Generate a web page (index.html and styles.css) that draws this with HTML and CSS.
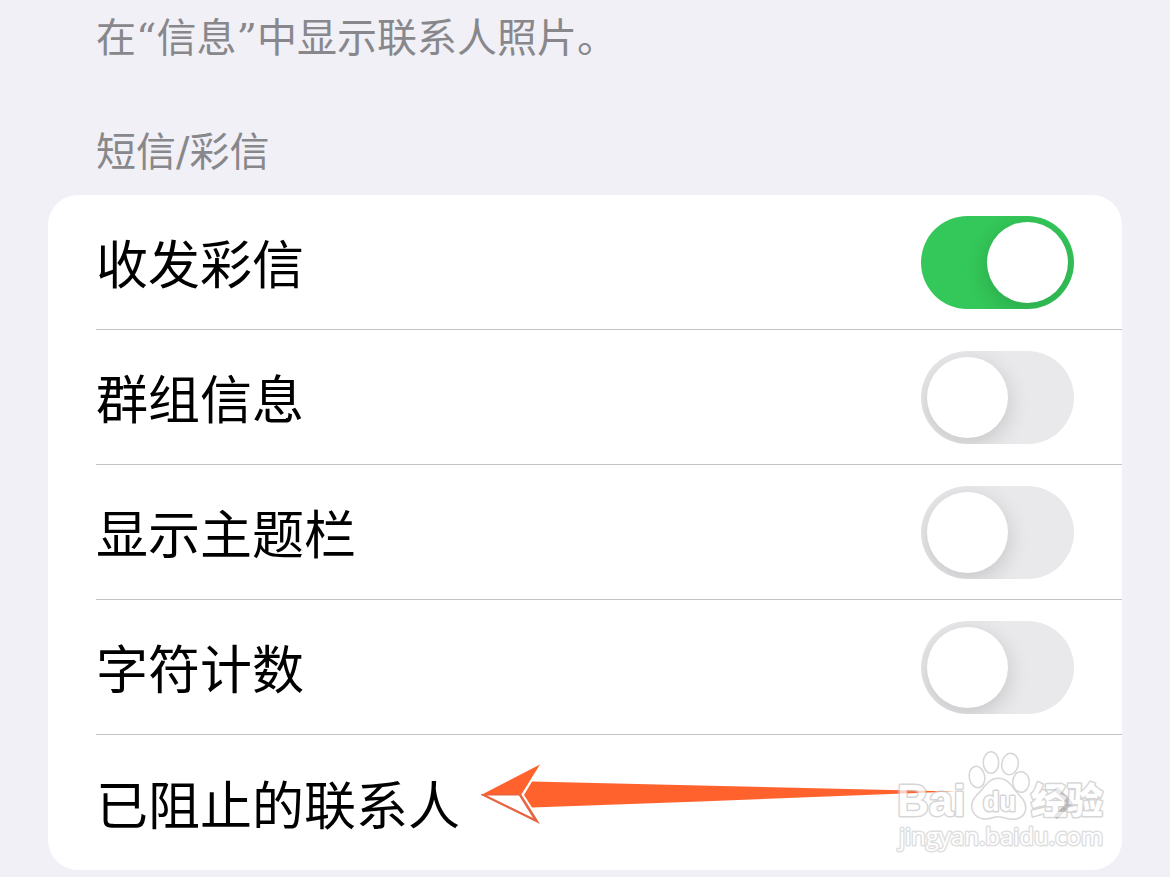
FILE: index.html
```
<!DOCTYPE html>
<html lang="zh-CN">
<head>
<meta charset="utf-8">
<meta name="viewport" content="width=device-width, initial-scale=1">
<title>信息</title>
<link rel="stylesheet" href="styles.css">
</head>
<body>
<main class="settings">
  <p class="note">在“信息”中显示联系人照片。</p>
  <h2 class="section-title">短信/彩信</h2>
  <section class="card">
    <div class="row">
      <label class="row-label" for="mms">收发彩信</label>
      <input class="switch" type="checkbox" role="switch" id="mms" checked>
    </div>
    <div class="row">
      <label class="row-label" for="group">群组信息</label>
      <input class="switch" type="checkbox" role="switch" id="group">
    </div>
    <div class="row">
      <label class="row-label" for="subject">显示主题栏</label>
      <input class="switch" type="checkbox" role="switch" id="subject">
    </div>
    <div class="row">
      <label class="row-label" for="count">字符计数</label>
      <input class="switch" type="checkbox" role="switch" id="count">
    </div>
    <a class="row" href="#blocked">
      <span class="row-label">已阻止的联系人</span>
      <svg class="arrow" width="480" height="70" viewBox="480 760 480 70" aria-hidden="true">
        <path fill="#ff622d" d="M532 781.500L700 785.500L955 791.500L700 801.500L532 807.500L524 795Z"/>
        <path fill="#fff" d="M481 795H521L540 824Z"/>
        <path fill="#ff622d" d="M481 795L540 764.500L521 795Z"/>
        <path fill="#e56540" fill-rule="evenodd" d="M481 795L540 824L521 794H481ZM487 795.500L533 818L519 795.500Z"/>
      </svg>
      <svg class="chevron" width="20" height="34" viewBox="0 0 20 34" aria-hidden="true">
        <path d="M3 4L16 17L3 30" fill="none" stroke="#b4b4b7" stroke-width="5" stroke-linecap="round" stroke-linejoin="round"/>
      </svg>
      <svg class="watermark" width="220" height="106" viewBox="892 748 220 106" aria-hidden="true">
        <g class="mark">
          <ellipse cx="977" cy="777" rx="7" ry="10" transform="rotate(-10 977 777)"/>
          <ellipse cx="991" cy="762.500" rx="7" ry="10"/>
          <ellipse cx="1010" cy="764" rx="7.500" ry="10" transform="rotate(10 1010 764)"/>
          <ellipse cx="1021" cy="782" rx="7.500" ry="9.500"/>
          <path d="M998 779C988 779 985 789 977 796C969 804 972 816 983 818C990 819 993 816 998 816C1005 816 1009 820 1017 818C1027 815 1027 804 1020 797C1012 789 1009 779 998 779Z"/>
          <text class="bai" x="897" y="816">Bai</text>
          <text class="du" x="983" y="811">du</text>
          <text class="jingyan" x="1031" y="814">经验</text>
          <text class="site" x="899" y="845">jingyan.baidu.com</text>
        </g>
      </svg>
    </a>
  </section>
</main>
</body>
</html>
```
FILE: styles.css
```
* { box-sizing: border-box; }

body {
  margin: 0;
  background: #f1f0f6;
  color: #000;
  font-family: "Noto Sans CJK SC", sans-serif;
}

.settings { padding: 8px 48px 7px; }

.note,
.section-title {
  margin: 0;
  padding-left: 48px;
  color: #88888c;
  font-family: "DejaVu Sans", "Noto Sans CJK SC", sans-serif;
  font-size: 40px;
  font-weight: 400;
  line-height: 60px;
}

.note { font-family: "DejaVu Serif", "Noto Sans CJK SC", sans-serif; }

.section-title { padding-top: 54px; padding-bottom: 13px; }

.card {
  padding-left: 48px;
  background: #fff;
  border-radius: 30px;
}

.row {
  position: relative;
  display: flex;
  align-items: center;
  justify-content: space-between;
  min-height: 135px;
  padding-right: 48px;
  border-bottom: 1px solid #c4c4c7;
  color: inherit;
  text-decoration: none;
}

.row:last-child { border-bottom: 0; }

.row-label {
  font-size: 52px;
  font-weight: 400;
  line-height: 72px;
}

.switch {
  appearance: none;
  width: 153px;
  height: 93px;
  margin: 0;
  padding: 6px;
  overflow: hidden;
  border-radius: 47px;
  background: #e9e9eb;
}

.switch::before {
  content: "";
  display: block;
  width: 81px;
  height: 81px;
  border-radius: 50%;
  background: #fff;
  box-shadow: 0 6px 22px rgba(0, 0, 0, 0.16);
}

.switch:checked { background: #34c759; }
.switch:checked::before { margin-left: auto; }

.arrow {
  position: absolute;
  left: 384px;
  top: 25px;
}

.watermark {
  position: absolute;
  right: 10px;
  top: 13px;
}

.mark {
  fill: #fff;
  stroke: #c6c6c6;
  stroke-width: 3px;
  stroke-linejoin: round;
  paint-order: stroke;
  opacity: 0.7;
}

.bai {
  font: 700 44px "Liberation Sans", sans-serif;
}

.du {
  font: 700 27px "Liberation Sans", sans-serif;
}

.jingyan {
  font: 900 36px "Noto Sans CJK SC", sans-serif;
}

.site {
  stroke: #d2d2d2;
  font: 400 24px "Open Sans", sans-serif;
}
```
